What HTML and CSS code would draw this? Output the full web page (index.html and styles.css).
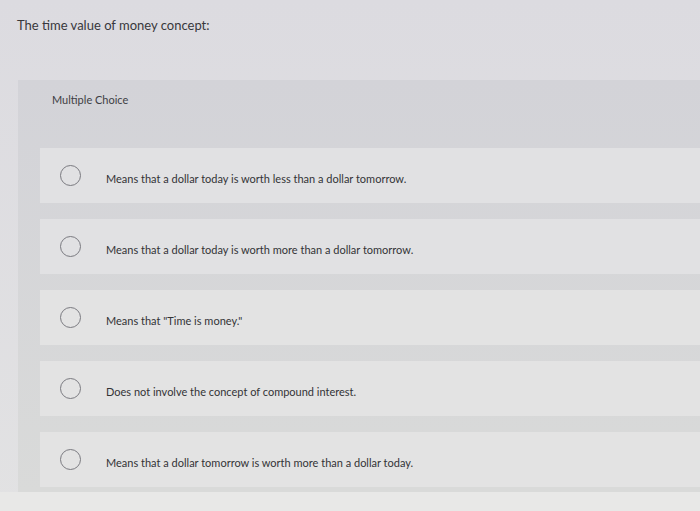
FILE: index.html
```html
<!DOCTYPE html>
<html lang="en">
<head>
    <meta charset="UTF-8">
    <title>The time value of money concept</title>
    <link rel="stylesheet" href="styles.css">
</head>
<body>
    <div class="question">
        <p class="prompt">The time value of money concept:</p>

        <div class="answers">
            <div class="answers-type">Multiple Choice</div>

            <ul class="choices">
                <li class="choice"><span class="radio"></span><span class="label">Means that a dollar today is worth less than a dollar tomorrow.</span></li>
                <li class="choice"><span class="radio"></span><span class="label">Means that a dollar today is worth more than a dollar tomorrow.</span></li>
                <li class="choice"><span class="radio"></span><span class="label">Means that "Time is money."</span></li>
                <li class="choice"><span class="radio"></span><span class="label">Does not involve the concept of compound interest.</span></li>
                <li class="choice"><span class="radio"></span><span class="label">Means that a dollar tomorrow is worth more than a dollar today.</span></li>
            </ul>
        </div>
    </div>
    <div class="footer-strip"></div>
</body>
</html>
```

FILE: styles.css
```css
body {
    margin: 0;
    font-family: Lato, "Open Sans", Arial, sans-serif;
    color: #3a3a3e;
    background: linear-gradient(#dcdbe0, #e2e2e3);
}

.question {
    padding: 16px 0 0 18px;
}

.prompt {
    margin: 0 0 0 -1px;
    font-size: 13px;
    line-height: 18px;
    color: #38383c;
}

.answers {
    margin-top: 46px;
    padding: 10px 0 5px 22px;
    background: linear-gradient(#d3d3d8, #d9dad9);
}

.answers-type {
    padding-left: 12px;
    font-size: 11px;
    line-height: 20px;
    color: #3e3e44;
}

.choices {
    list-style: none;
    margin: 38px 0 0;
    padding: 0;
    display: flex;
    flex-direction: column;
    gap: 16px;
}

.choice {
    height: 55px;
    display: flex;
    align-items: center;
    background: #e1e1e3;
    padding-left: 20px;
}

.choice:nth-child(n+3) {
    background: #e3e3e3;
}

.radio {
    width: 21px;
    height: 21px;
    border: 1.3px solid #7a7a80;
    border-radius: 50%;
    box-sizing: border-box;
    flex-shrink: 0;
}

.label {
    margin-left: 25px;
    font-size: 11px;
    color: #333336;
    padding-top: 6px;
}

.footer-strip {
    height: 30px;
    background: #e8e8e7;
}
```
